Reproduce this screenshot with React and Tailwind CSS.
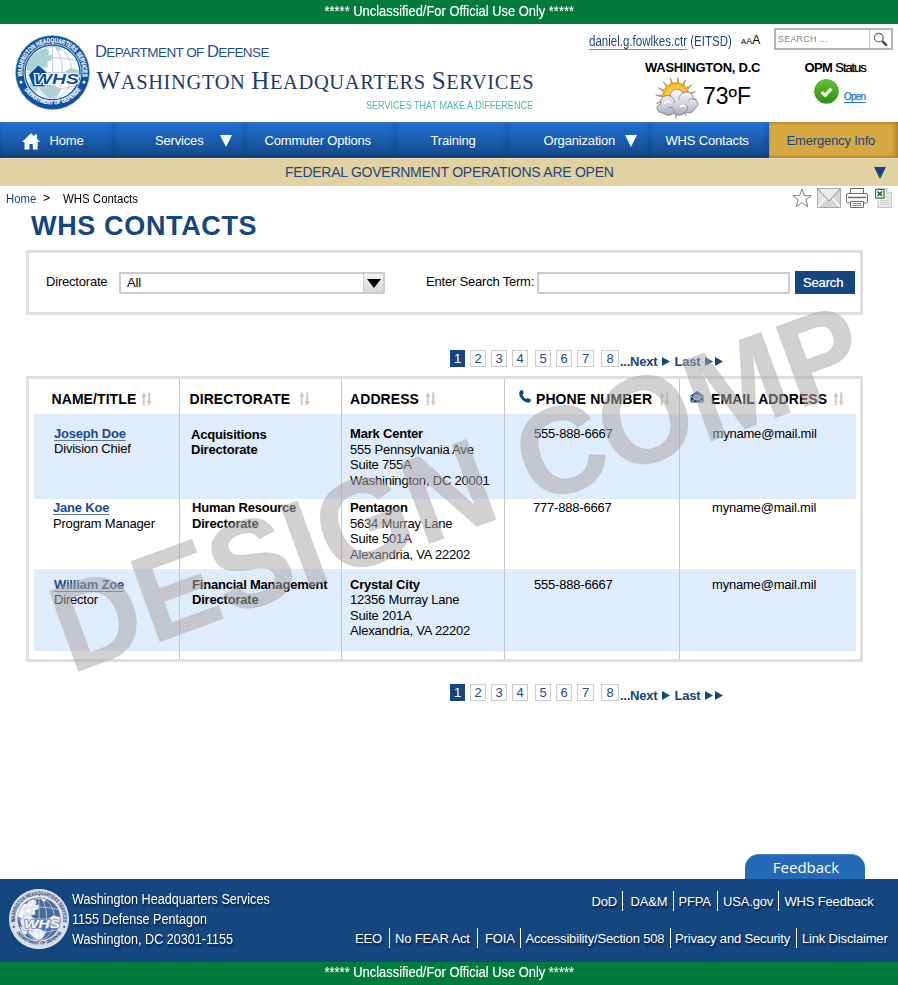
import React from "react";

const SANS = "font-['Liberation_Sans',Arial,sans-serif]";

function Seal({ id, className, ring, rim, ringText, inner, land, grid, badge, badgeText, badgeEdge }) {
  return (
    <svg viewBox="0 0 100 100" className={className}>
      <defs>
        <path id={id + "-top"} d="M 10.2 56 A 40.2 40.2 0 1 1 89.8 56" />
        <path id={id + "-bottom"} d="M 8.5 66 A 45.6 45.6 0 0 0 91.5 66" />
        <clipPath id={id + "-globe"}>
          <circle cx="50" cy="50" r="35.5" />
        </clipPath>
      </defs>
      <circle cx="50" cy="50" r="50" fill={rim} />
      <circle cx="50" cy="50" r="49" fill={ring} />
      <circle cx="50" cy="50" r="38.8" fill={rim} />
      <circle cx="50" cy="50" r="37.4" fill={ring} />
      <circle cx="50" cy="50" r="35.8" fill={inner} />
      <g clipPath={`url(#${id}-globe)`}>
        <path
          fill={land}
          d="M16 34 L24 25 L30 24 L34 19 L42 18 L46 22 L44 27 L50 26 L49 33 L43 36 L44 42 L37 44 L34 50 L28 46 L22 50 L15 46 Z M54 15 L62 17 L60 21 L55 20 Z M66 49 L74 44 L85 47 L84 60 L76 64 L68 58 Z M36 66 L50 66 L62 72 L57 80 L48 86 L40 80 L32 72 Z M18 62 L26 66 L30 74 L24 78 Z"
        />
        <g fill="none" stroke={grid} strokeWidth="1.3">
          <ellipse cx="50" cy="50" rx="13" ry="35" />
          <ellipse cx="50" cy="50" rx="26" ry="35" />
          <path d="M50 15 V85 M18 34 Q50 26 82 34 M15 50 H85 M20 68 Q50 76 80 68" />
        </g>
      </g>
      <path d="M18 53 L31 40 L43 50 L40 69 L24 69 Z" fill={badge} stroke={badgeEdge} strokeWidth=".8" />
      <text
        x="25"
        y="65"
        textLength="60"
        lengthAdjust="spacingAndGlyphs"
        fontSize="19"
        fontWeight="700"
        fontStyle="italic"
        fill={badgeText}
        stroke={badgeEdge}
        strokeWidth="2.6"
        paintOrder="stroke"
        fontFamily="Liberation Sans, sans-serif"
      >
        WHS
      </text>
      <g fontFamily="Liberation Sans, sans-serif" fontWeight="700" fill={ringText} stroke={ringText} strokeWidth=".25">
        <text fontSize="9">
          <textPath href={`#${id}-top`} textLength="136" lengthAdjust="spacingAndGlyphs" startOffset="1">
            WASHINGTON HEADQUARTERS SERVICES
          </textPath>
        </text>
        <text fontSize="7.6">
          <textPath href={`#${id}-bottom`} textLength="88" lengthAdjust="spacingAndGlyphs" startOffset="8">
            DEPARTMENT OF DEFENSE
          </textPath>
        </text>
      </g>
      <circle cx="8" cy="63" r="1.9" fill={ringText} />
      <circle cx="92" cy="63" r="1.9" fill={ringText} />
    </svg>
  );
}

function Weather() {
  const rays = [-172, -150, -128, -106, -84, -62, -40, -18, 4, 60, 90, 130, 165];
  return (
    <svg viewBox="0 0 44 42" className="h-[42px] w-[44px]">
      <defs>
        <linearGradient id="cloud" x1="0" y1="0" x2="0" y2="1">
          <stop offset="0" stopColor="#fafafc" />
          <stop offset=".6" stopColor="#d3d4de" />
          <stop offset="1" stopColor="#a9abbd" />
        </linearGradient>
        <radialGradient id="sun">
          <stop offset="0" stopColor="#ffe873" />
          <stop offset=".75" stopColor="#fbc62c" />
          <stop offset="1" stopColor="#ec9d17" />
        </radialGradient>
      </defs>
      {rays.map((a) => (
        <path key={a} d="M34 20 L41.5 21 L34 22.4 Z" transform={`rotate(${a} 21 21)`} fill="#dcc27a" stroke="#76715f" strokeWidth=".5" />
      ))}
      <circle cx="21" cy="19" r="13.5" fill="url(#sun)" stroke="#e0a02a" strokeWidth=".6" />
      <path
        d="M8 36 C1 36 0 28 6 27 C4 21 10 17 15 19 C16 11 25 10 28 16 C33 13 39 17 38 22 C44 23 44 30 40 31 C39 36 33 37 30 35 C27 39 22 39 19 36 C16 39 11 39 8 36 Z"
        fill="url(#cloud)"
        stroke="#73758a"
        strokeWidth=".8"
      />
      <path d="M15 19 C18 20 20 23 19 26 M28 16 C25 18 23 20 24 23 M19 36 C20 32 17 29 13 31 M30 35 C33 33 34 29 30 27 M38 22 C36 21 34 22 33 24" fill="none" stroke="#8e90a4" strokeWidth=".9" />
      <path d="M9 27 C11 24 14 24 16 26 M25 30 C27 28 30 28 31 30" fill="none" stroke="#ffffff" strokeWidth="1.4" />
    </svg>
  );
}

function Banner({ className }) {
  return (
    <div className={`flex justify-center bg-[#007b3c] text-white ${className}`}>
      <div className="flex w-[250px] justify-center text-[14px] whitespace-nowrap [text-shadow:0_0_1px_rgba(255,255,255,.5)]">
        <span className="inline-block scale-x-[.922]">***** Unclassified/For Official Use Only *****</span>
      </div>
    </div>
  );
}

function Header() {
  return (
    <header className="flex h-[98px] bg-white">
      <Seal
        id="seal"
        className="mt-[11px] ml-[15px] h-[75px] w-[75px] shrink-0"
        rim="#9fd0cf"
        ring="#12519f"
        ringText="#ffffff"
        inner="#fbfdff"
        land="#a8d5cd"
        grid="#c3c6e6"
        badge="#0f4da0"
        badgeText="#0f4da0"
        badgeEdge="#ffffff"
      />
      <div className="ml-[5px] w-[441px] shrink-0 pt-[17px] whitespace-nowrap">
        <div className="text-[13.5px] leading-[20px] tracking-[-0.57px] text-[#1d4f93]">
          <span className="text-[16.5px]">D</span>EPARTMENT OF <span className="text-[16.5px]">D</span>EFENSE
        </div>
        <div className="mt-[4px] ml-[1.5px] font-['Liberation_Serif',serif] text-[20.5px] leading-[28px] tracking-[0.62px] text-[#1f3b68]">
          <span className="text-[25px]">W</span>ASHINGTON <span className="text-[25px]">H</span>EADQUARTERS{" "}
          <span className="text-[25px]">S</span>ERVICES
        </div>
        <div className="mt-[2px] ml-[271px] w-[167px] text-[11px] leading-[14px] text-[#52b3a7]">
          <span className="inline-block origin-left scale-x-[.824]">SERVICES THAT MAKE A DIFFERENCE</span>
        </div>
      </div>
      <div className="ml-[53px] flex-1">
        <div className="flex h-[35px] pt-[4px]">
          <div className="w-[143px] pt-[3px] text-[14px] leading-[20px] whitespace-nowrap text-[#1b4587]">
            <span className="inline-block origin-left scale-x-[.823]">
              <span className="border-b border-[#6f8fbd]">daniel.g.fowlkes.ctr</span> (EITSD)
            </span>
          </div>
          <div className="ml-[9px] flex h-[18px] w-[22px] items-baseline text-black">
            <span className="text-[8px] leading-[25px]">A</span>
            <span className="text-[9px] leading-[25px]">A</span>
            <span className="text-[12px] leading-[25px]">A</span>
          </div>
          <div className="ml-[11px] flex h-[22px] w-[119px] border-[2.5px] border-[#b3b3b3] bg-white">
            <div className="flex-1 pl-[2px] text-[9px] leading-[18px] tracking-[0.2px] text-[#858585]">SEARCH ...</div>
            <div className="flex w-[22px] items-center justify-center border-l border-[#c4c4c4]">
              <svg viewBox="0 0 16 16" className="h-[15px] w-[15px]">
                <circle cx="6.2" cy="6" r="4.6" fill="#fff" stroke="#666" strokeWidth="1.3" />
                <path d="M9.4 9.2 L10.6 10.4" stroke="#555" strokeWidth="1.4" />
                <path d="M11 10.8 L14 13.8" stroke="#444" strokeWidth="2.8" strokeLinecap="round" />
              </svg>
            </div>
          </div>
        </div>
        <div className="flex">
          <div className="ml-[56px] w-[118px]">
            <div className="text-[13px] leading-[18px] font-bold tracking-[-0.25px] whitespace-nowrap text-black">WASHINGTON, D.C</div>
            <div className="ml-[10px] flex h-[42px]">
              <Weather />
              <span className="ml-[4px] pt-[6px] text-[23px] leading-[26px] text-black">73ºF</span>
            </div>
          </div>
          <div className="ml-[41.5px] w-[64px]">
            <div className="text-[13px] leading-[18px] whitespace-nowrap text-black">
              <span className="font-bold tracking-[-0.6px]">OPM</span>
              <span className="ml-[3px] tracking-[-1.1px] [text-shadow:0_0_1px_rgba(0,0,0,.6)]">Status</span>
            </div>
            <div className="ml-[9px] flex pt-[2px]">
              <svg viewBox="0 0 24 24" className="h-[25px] w-[25px]">
                <defs>
                  <linearGradient id="ok" x1="0" y1="0" x2="0" y2="1">
                    <stop offset="0" stopColor="#63c433" />
                    <stop offset="1" stopColor="#2e8f12" />
                  </linearGradient>
                </defs>
                <circle cx="12" cy="12" r="11.5" fill="url(#ok)" stroke="#3a9a1c" strokeWidth=".6" />
                <path d="M7.4 12.6 L10.8 15.6 L16.6 9.2" fill="none" stroke="#fff" strokeWidth="3" />
              </svg>
              <span className="ml-[5.5px] pt-[10px] text-[10px] leading-[16px] tracking-[-0.8px] text-[#1c78d4] underline underline-offset-2 [text-shadow:0_0_1px_#6eaee8]">
                Open
              </span>
            </div>
          </div>
        </div>
      </div>
    </header>
  );
}

const BLUE_TAB =
  "bg-[linear-gradient(to_bottom,#3078d0_0,#2b73ca_2px,#1e6bc7_4px,#1b62b9_14px,#154b8c_32px,#123f78_100%)] text-white shadow-[inset_-3px_0_4px_rgba(5,30,80,.16),inset_2px_0_3px_rgba(5,30,80,.08)]";

function Tab({ className, children }) {
  return <div className={`flex h-[36px] items-center pt-[2px] whitespace-nowrap ${className}`}>{children}</div>;
}

function Down({ className }) {
  return (
    <svg viewBox="0 0 12 12" className={className} fill="currentColor">
      <path d="M0 0 H12 L6 12 Z" />
    </svg>
  );
}

function Nav() {
  return (
    <nav className="flex text-[13px] tracking-[-0.17px]">
      <Tab className={`w-[115px] pl-[22px] ${BLUE_TAB}`}>
        <svg viewBox="0 0 18 17" className="mr-[9.5px] h-[17px] w-[18px] shrink-0" fill="#fff">
          <path d="M9 0.3 L12.5 3.4 V1.6 H15 V5.6 L18 9 H15.6 V16.5 H10.8 V11 H7.4 V16.5 H2.5 V9 H0 Z" />
        </svg>
        Home
      </Tab>
      <Tab className={`w-[131px] pl-[40px] ${BLUE_TAB}`}>
        Services
        <Down className="ml-[16px] h-[12px] w-[12px]" />
      </Tab>
      <Tab className={`w-[150px] pl-[18.5px] ${BLUE_TAB}`}>Commuter Options</Tab>
      <Tab className={`w-[112px] pl-[34.5px] ${BLUE_TAB}`}>Training</Tab>
      <Tab className={`w-[142px] pl-[35.5px] ${BLUE_TAB}`}>
        Organization
        <Down className="ml-[9.5px] h-[12px] w-[12px]" />
      </Tab>
      <Tab className={`w-[119px] pl-[15.5px] ${BLUE_TAB}`}>WHS Contacts</Tab>
      <Tab className="w-[129px] bg-[#d8a842] pl-[17.5px] text-[#15467f] shadow-[inset_-3px_0_4px_rgba(120,80,0,.35),inset_0_2px_2px_rgba(190,140,40,.5),inset_0_-2px_2px_rgba(150,105,10,.3)]">
        Emergency Info
      </Tab>
    </nav>
  );
}

function PageTools() {
  return (
    <div className="flex pt-[2px]">
      <svg viewBox="0 0 20 20" className="h-[20px] w-[20px]" fill="#fff" stroke="#808080" strokeWidth="1">
        <path d="M10 1 L12.4 7.5 L19.2 7.7 L13.8 11.8 L15.8 18.6 L10 14.7 L4.2 18.6 L6.2 11.8 L0.8 7.7 L7.6 7.5 Z" />
      </svg>
      <svg viewBox="0 0 24 20" className="ml-[5px] h-[20px] w-[24px]">
        <rect x=".5" y=".5" width="23" height="19" fill="#e3e4e6" stroke="#a9a9a9" />
        <path d="M23 1 V19 H1 Z" fill="#cfd0d3" opacity=".7" />
        <path d="M1 19 L9 9.5 M23 19 L15 9.5" stroke="#fff" strokeWidth="1.2" />
        <path d="M1 1 L12 13 L23 1" fill="#ececee" stroke="#8d8d8d" strokeWidth="1" />
      </svg>
      <svg viewBox="0 0 22 20" className="ml-[5px] h-[20px] w-[22px]" fill="#fff" stroke="#6b6b6b" strokeWidth="1">
        <path d="M4.5 6 V.5 H17.5 V6" />
        <rect x=".5" y="5.5" width="21" height="9.5" rx="1.5" />
        <path d="M2 9.5 H20" stroke="#777" strokeWidth="1.6" />
        <path d="M4.5 13.5 H17.5 V19.5 H4.5 Z" />
        <path d="M6.5 15.5 H15.5 M6.5 17.5 H15.5" stroke="#888" />
      </svg>
      <svg viewBox="0 0 17 20" className="ml-[7px] h-[20px] w-[17px]">
        <path d="M3 .5 H12 L16.5 5 V19.5 H3 Z" fill="#eeeeee" stroke="#c4c4c4" />
        <path d="M12 .5 V5 H16.5" fill="#fff" stroke="#b5b5b5" />
        <path d="M5 12.5 H14.5 M5 14.5 H14.5 M5 16.5 H14.5 M11 8.5 H14.5 M11 10.5 H14.5" stroke="#cfcfcf" />
        <rect x=".5" y="1.5" width="8.5" height="8.5" fill="#fff" stroke="#1c7a35" strokeWidth="1.2" />
        <path d="M2.5 3.5 L7 8 M7 3.5 L2.5 8" stroke="#156a2c" strokeWidth="1.7" />
      </svg>
    </div>
  );
}

function SearchForm() {
  return (
    <section className="ml-[26px] flex h-[65px] w-[837px] border-[3px] border-[#e0dfe0] text-[13px] whitespace-nowrap text-black">
      <div className="ml-[17px] w-[73px] pt-[20px] leading-[18px] tracking-[-0.2px]">Directorate</div>
      <div className="mt-[19px] flex h-[22px] w-[266px] border-2 border-[#cfcbcd] bg-white shadow-[inset_0_0_1px_#cfcbcd]">
        <div className="flex-1 pl-[6px] leading-[17px] tracking-[-0.2px]">All</div>
        <div className="flex w-[20px] items-center justify-center border-l border-[#cfcbcd] bg-gradient-to-b from-[#f5f5f5] to-[#d9d7d8]">
          <svg viewBox="0 0 14 9" className="h-[9px] w-[14px]">
            <path d="M0 0 H14 L7 9 Z" fill="#000" />
          </svg>
        </div>
      </div>
      <div className="ml-[41px] w-[111px] pt-[20px] leading-[18px] tracking-[-0.2px]">Enter Search Term:</div>
      <div className="mt-[19px] h-[22px] w-[253px] border-2 border-[#cfcbcd] bg-white shadow-[inset_0_0_1px_#cfcbcd]" />
      <div className="mt-[18px] ml-[5px] h-[23px] w-[60px] bg-[#14467f] pl-[8px] leading-[23px] tracking-[-0.15px] text-white [text-shadow:0_0_1px_rgba(255,255,255,.6)]">
        Search
      </div>
    </section>
  );
}

function Play({ className }) {
  return (
    <svg viewBox="0 0 8 9" preserveAspectRatio="none" className={`h-[9px] w-[8px] ${className}`}>
      <path d="M0 0 L8 4.5 L0 9 Z" fill="#14467f" />
    </svg>
  );
}

function Pager() {
  const box = "h-[17px] border border-[#cfcdce] text-center leading-[15px] text-[#1b4a8a] shadow-[inset_0_0_1px_#cfcdce]";
  return (
    <div className="ml-[450px] flex h-[20px] text-[13px] text-[#14467f]">
      <div className="h-[17px] w-[15px] bg-[#14467f] text-center leading-[17px] text-white">1</div>
      <div className={`ml-[5px] w-[16px] ${box}`}>2</div>
      <div className={`ml-[5px] w-[16px] ${box}`}>3</div>
      <div className={`ml-[5px] w-[16px] ${box}`}>4</div>
      <div className={`ml-[7px] w-[16px] ${box}`}>5</div>
      <div className={`ml-[5px] w-[16px] ${box}`}>6</div>
      <div className={`ml-[5px] w-[17px] ${box}`}>7</div>
      <div className={`ml-[7px] w-[18px] ${box}`}>8</div>
      <div className="ml-[1px] flex pt-[3px] leading-[17px] font-bold tracking-[-0.25px]">
        <span className="w-[42px]">...Next</span>
        <Play className="mt-[4px]" />
        <span className="ml-[4.5px] w-[30px]">Last</span>
        <Play className="mt-[4px]" />
        <Play className="mt-[4px] ml-[2px]" />
      </div>
    </div>
  );
}

function Sort({ className }) {
  return (
    <svg viewBox="0 0 11 14" className={`h-[14px] w-[11px] shrink-0 ${className}`} fill="#c9c9c9">
      <path d="M2.8 0 L5.3 5 H3.8 V13.5 H1.8 V5 H0.3 Z" />
      <path d="M8.2 14 L5.7 9 H7.2 V0.5 H9.2 V9 H10.7 Z" />
    </svg>
  );
}

const PEOPLE = [
  {
    name: "Joseph Doe",
    title: "Division Chief",
    unit: "Acquisitions",
    place: "Mark Center",
    lines: ["555 Pennsylvania Ave", "Suite 755A", "Washinington, DC 20001"],
    phone: "555-888-6667",
    row: "h-[85px] bg-[#dfecfb]",
    pad: "pt-[12px]",
    unitPad: "pt-[13px] pl-[11px] leading-[15px]",
    namePad: "pl-[20px] leading-[15px]",
    phonePad: "pl-[29px]",
    mailPad: "pl-[32.5px]",
  },
  {
    name: "Jane Koe",
    title: "Program Manager",
    unit: "Human Resource",
    place: "Pentagon",
    lines: ["5634 Murray Lane", "Suite 501A", "Alexandria, VA 22202"],
    phone: "777-888-6667",
    row: "h-[70px] bg-white",
    pad: "pt-[1px]",
    unitPad: "pt-[1px] pl-[12px]",
    namePad: "pl-[19px]",
    phonePad: "pl-[28px]",
    mailPad: "pl-[32px]",
  },
  {
    name: "William Zoe",
    title: "Director",
    unit: "Financial Management",
    place: "Crystal City",
    lines: ["12356 Murray Lane", "Suite 201A", "Alexandria, VA 22202"],
    phone: "555-888-6667",
    row: "h-[82px] bg-[#dfecfb]",
    pad: "pt-[7.5px]",
    unitPad: "pt-[7.5px] pl-[12px]",
    namePad: "pl-[20px]",
    phonePad: "pl-[29px]",
    mailPad: "pl-[32px]",
  },
];

const COLS = "ml-[5px] grid w-[822px] grid-cols-[145px_162px_163px_175px_177px] whitespace-nowrap";
const RULE = "border-l border-[#c6c4c5]";

function Contacts() {
  return (
    <section className="ml-[26px] h-[286px] w-[837px] border-[3px] border-[#e0dfe0] text-black">
      <div className={`${COLS} h-[35px] text-[14px] leading-[40px] font-bold tracking-[0.08px]`}>
        <div className="flex pl-[17.5px]">
          NAME/TITLE
          <Sort className="mt-[13px] ml-[5px]" />
        </div>
        <div className={`flex pl-[9.5px] ${RULE}`}>
          DIRECTORATE
          <Sort className="mt-[13px] ml-[9px]" />
        </div>
        <div className={`flex pl-[8px] ${RULE}`}>
          ADDRESS
          <Sort className="mt-[13px] ml-[6px]" />
        </div>
        <div className={`flex pl-[14px] ${RULE}`}>
          <svg viewBox="0 0 12 13" className="mt-[11px] mr-[5px] h-[13px] w-[12px] shrink-0">
            <path d="M1.8 0.3 L3.8 0.2 L4.8 3.4 L3.4 4.6 C4 6.6 5.4 8.2 7.3 9.1 L8.7 8 L11.8 9.6 L11.6 11.6 C10.8 12.6 9.4 13 8 12.6 C3.8 11.4 .6 7.6 .2 3.6 C.2 2.2 .8 1 1.8 .3 Z" fill="#14467f" />
          </svg>
          PHONE NUMBER
          <Sort className="mt-[13px] ml-[6.5px]" />
        </div>
        <div className={`flex pl-[10px] ${RULE}`}>
          <svg viewBox="0 0 14 12" className="mt-[12px] mr-[7px] h-[12px] w-[14px] shrink-0">
            <path d="M.5 4.5 L7 0 L13.5 4.5 V11.5 H.5 Z" fill="#14467f" />
            <path d="M3 3.4 H11 V5.8 L7 8.2 L3 5.8 Z" fill="#7e9cc2" />
            <path d="M.5 5 L7 9 L13.5 5 M.8 11.3 L5.4 8 M13.2 11.3 L8.6 8" fill="none" stroke="#dfe8f3" strokeWidth=".9" />
          </svg>
          EMAIL ADDRESS
          <Sort className="mt-[13px] ml-[6px]" />
        </div>
      </div>
      {PEOPLE.map((p) => (
        <div key={p.name} className={`${COLS} ${p.row} text-[13px] leading-[15.6px] tracking-[-0.2px]`}>
          <div className={`${p.pad} ${p.namePad}`}>
            <div className="font-bold text-[#1b4a8a] underline decoration-[#5577aa] underline-offset-[2px]">{p.name}</div>
            <div>{p.title}</div>
          </div>
          <div className={`font-bold ${p.unitPad} ${RULE}`}>
            <div>{p.unit}</div>
            <div>Directorate</div>
          </div>
          <div className={`pl-[8px] ${p.pad} ${RULE}`}>
            <div className="font-bold">{p.place}</div>
            {p.lines.map((line) => (
              <div key={line}>{line}</div>
            ))}
          </div>
          <div className={`${p.pad} ${p.phonePad} ${RULE}`}>{p.phone}</div>
          <div className={`${p.pad} ${p.mailPad} ${RULE}`}>myname@mail.mil</div>
        </div>
      ))}
      <div className={`${COLS} h-[8px]`}>
        <div />
        <div className={RULE} />
        <div className={RULE} />
        <div className={RULE} />
        <div className={RULE} />
      </div>
    </section>
  );
}

function Bar({ className }) {
  return <span className={`h-[20px] w-px bg-white ${className}`} />;
}

function Footer() {
  return (
    <footer className="flex h-[83px] bg-[#14467f] text-white [text-shadow:1px_2px_2px_rgba(0,0,0,.6)]">
      <Seal
        id="seal-footer"
        className="mt-[10px] ml-[9px] h-[60px] w-[60px] shrink-0 [text-shadow:none]"
        rim="#eef0f5"
        ring="#d9dde8"
        ringText="#44587f"
        inner="#4a6c9e"
        land="#f3f5f9"
        grid="#ccd5e4"
        badge="#e6eaf2"
        badgeText="#f4f6fa"
        badgeEdge="#7f93b8"
      />
      <div className="ml-[3px] w-[200px] shrink-0 pt-[10px] text-[14px] leading-[20px] whitespace-nowrap">
        <div className="origin-left scale-x-[.9]">Washington Headquarters Services</div>
        <div className="origin-left scale-x-[.9]">1155 Defense Pentagon</div>
        <div className="origin-left scale-x-[.9]">Washington, DC 20301-1155</div>
      </div>
      <div className="ml-[83px] flex-1 text-[13px] leading-[22px] tracking-[-0.17px] whitespace-nowrap">
        <div className="mt-[12px] ml-[236.5px] flex h-[20px]">
          <span className="w-[30px]">DoD</span>
          <Bar />
          <span className="ml-[8px] w-[42px]">DA&amp;M</span>
          <Bar />
          <span className="ml-[5px] w-[38.5px]">PFPA</span>
          <Bar />
          <span className="ml-[5px] w-[54.5px]">USA.gov</span>
          <Bar />
          <span className="ml-[6px]">WHS Feedback</span>
        </div>
        <div className="mt-[17px] flex h-[20px]">
          <span className="w-[34px]">EEO</span>
          <Bar />
          <span className="ml-[5px] w-[82px]">No FEAR Act</span>
          <Bar />
          <span className="ml-[7px] w-[34.5px]">FOIA</span>
          <Bar />
          <span className="ml-[5px] w-[144px]">Accessibility/Section 508</span>
          <Bar />
          <span className="ml-[4.5px] w-[120.5px]">Privacy and Security</span>
          <Bar />
          <span className="ml-[5.5px]">Link Disclaimer</span>
        </div>
      </div>
    </footer>
  );
}

export default function App() {
  return (
    <div className={`relative flex h-[985px] w-[898px] flex-col overflow-hidden bg-white ${SANS}`}>
      <Banner className="h-[24px] leading-[22px]" />
      <Header />
      <Nav />
      <div className="flex h-[28px] items-center border-t border-[#efe2bd] bg-[#e2d2a2] text-[14px] tracking-[-0.25px] text-[#1c4780]">
        <span className="ml-[285px] w-[588px] whitespace-nowrap">FEDERAL GOVERNMENT OPERATIONS ARE OPEN</span>
        <Down className="h-[12px] w-[14px] text-[#14467f]" />
      </div>
      <div className="flex h-[25px] text-[13px] leading-[25px] whitespace-nowrap">
        <div className="ml-[6px] w-[37px] text-[#1b4587]">
          <span className="inline-block origin-left scale-x-[.87]">Home</span>
        </div>
        <div className="w-[19.5px] text-[12px] leading-[24px] text-black">&gt;</div>
        <div className="mr-[653.5px] w-[76px] text-black">
          <span className="inline-block origin-left scale-x-[.88]">WHS Contacts</span>
        </div>
        <PageTools />
      </div>
      <h1 className="ml-[31px] h-[39px] text-[27px] leading-[31px] font-bold tracking-[0.65px] text-[#14467f]">WHS CONTACTS</h1>
      <SearchForm />
      <div className="pt-[35px] pb-[6px]">
        <Pager />
      </div>
      <Contacts />
      <div className="pt-[22px]">
        <Pager />
      </div>
      <div className="mt-auto mr-[33px] h-[25px] w-[120px] self-end rounded-t-[14px] border-t border-[#4a86c8] bg-[#2469b5] pl-[2px] text-center font-['Open_Sans','Noto_Sans',sans-serif] text-[15px] leading-[24px] text-white">
        Feedback
      </div>
      <Footer />
      <Banner className="h-[23px] leading-[20px]" />
      <div className="pointer-events-none absolute top-[572px] left-[71px] origin-[0_102px] scale-y-[1.03] -rotate-20 text-[120px] leading-[120px] font-bold whitespace-nowrap text-[rgba(171,167,168,.53)] [-webkit-text-stroke:1px_rgba(171,167,168,.25)]">
        DESIGN COMP
      </div>
    </div>
  );
}
